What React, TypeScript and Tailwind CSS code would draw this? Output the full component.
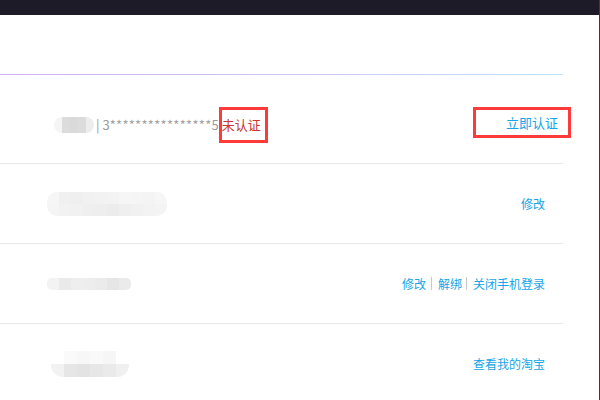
import React from "react";

// blurred mosaic placeholders (masked personal info)
function Mosaic({ rows, cell, className }: { rows: string[][]; cell: number; className?: string }) {
  return (
    <div className={"flex flex-col blur-[0.6px] overflow-hidden " + (className ?? "")}>
      {rows.map((r, i) => (
        <div key={i} className="flex">
          {r.map((c, j) => (
            <div key={j} style={{ width: cell, height: cell, background: c }} />
          ))}
        </div>
      ))}
    </div>
  );
}

const font = "font-['Noto_Sans_CJK_SC','Noto_Sans',sans-serif]";

export default function App() {
  return (
    <div className={"flex h-[400px] w-[600px] overflow-hidden bg-white " + font}>
      <div className="flex flex-1 flex-col">
        <div className="h-[15px] shrink-0 bg-[#1d1b27]" />
        <div className="h-[59px] shrink-0" />
        <div className="h-px w-[563px] shrink-0 bg-[#d6b0f2] bg-linear-to-r from-[#d4acf3] via-[#cfc4f4] to-[#bde2f7]" />

        <div className="flex h-[89px] w-[563px] shrink-0 items-center border-b border-[#e8e8e8] pl-[54px] pt-[11px]">
          <Mosaic
            className="rounded-full"
            cell={8}
            rows={[
              ["#f5f5f5", "#dcdcdc", "#dadada", "#dcdcdc", "#ededed"],
              ["#f5f5f5", "#dcdcdc", "#dadada", "#dcdcdc", "#ededed"],
            ]}
          />
          <span className="ml-[2px] text-[13px] leading-none text-[#9a9a9a]">| 3</span>
          <span className="text-[13px] leading-none tracking-[0.3px] text-[#a3a3a3]">****************</span>
          <span className="text-[13px] leading-none text-[#9a9a9a]">5</span>
          <span className="flex h-[36px] items-center border-[3px] border-[#ff3a3a] pr-[4px] text-[13px] text-[#c8372d]">
            未认证
          </span>
          <span className="ml-auto mr-[-8px] flex h-[31px] w-[98px] -translate-y-[2px] items-center justify-end border-[3px] border-[#ff3a3a] pr-[10px] text-[13px] text-[#16a5e6]">
            立即认证
          </span>
        </div>

        <div className="flex h-[80px] w-[563px] shrink-0 items-center border-b border-[#e8e8e8] pl-[47px] pr-[18px]">
          <Mosaic
            className="rounded-[10px]"
            cell={12}
            rows={[
              ["#f6f6f6", "#f0f0f0", "#efefef", "#f1f1f1", "#f2f2f2", "#f3f3f3", "#f6f6f6", "#f5f5f5", "#f4f4f4", "#f6f6f6"],
              ["#f5f5f5", "#f2f2f2", "#f1f1f1", "#efefef", "#eeeeee", "#ececec", "#efefef", "#f1f1f1", "#f3f3f3", "#f4f4f4"],
            ]}
          />
          <span className="ml-auto text-[12px] text-[#16a5e6]">修改</span>
        </div>

        <div className="flex h-[80px] w-[563px] shrink-0 items-center border-b border-[#e8e8e8] pl-[47px] pr-[18px]">
          <Mosaic
            className="rounded-[5px]"
            cell={12}
            rows={[["#f3f3f3", "#eaeaea", "#eeeeee", "#ededed", "#ebebeb", "#e6e6e6", "#ebebec"]]}
          />
          <div className="ml-auto flex items-center text-[12px] text-[#16a5e6]">
            <span>修改</span>
            <span className="ml-[5px] mr-[6px] h-[13px] w-px bg-[#c8c8c8]" />
            <span>解绑</span>
            <span className="ml-[4px] mr-[6px] h-[13px] w-px bg-[#c8c8c8]" />
            <span>关闭手机登录</span>
          </div>
        </div>

        <div className="flex h-[80px] w-[563px] shrink-0 items-center pl-[51px] pr-[18px]">
          <Mosaic
            className="rounded-[12px]"
            cell={13}
            rows={[
              ["#ffffff", "#fafafa", "#f7f7f7", "#f9f9f9", "#f6f6f6", "#ffffff"],
              ["#f2f2f2", "#e6e6e6", "#e3e3e3", "#e7e7e7", "#eaeaea", "#f0f0f0"],
            ]}
          />
          <span className="ml-auto text-[12px] text-[#16a5e6]">查看我的淘宝</span>
        </div>
      </div>
      <div className="w-px bg-[#8a1626]" />
    </div>
  );
}
